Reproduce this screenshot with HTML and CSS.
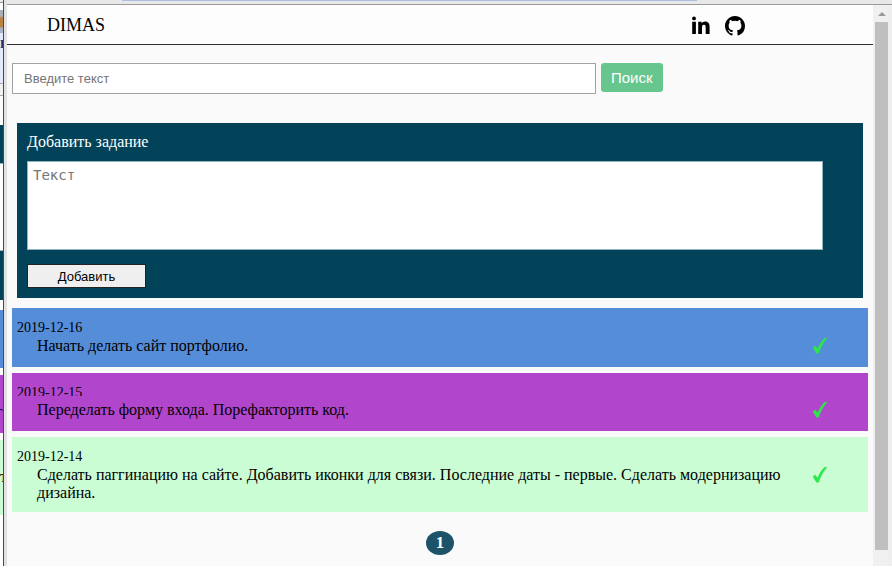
FILE: index.html
```html
<!DOCTYPE html>
<html lang="ru">
<head>
<meta charset="utf-8">
<title>DIMAS</title>
<link rel="stylesheet" href="styles.css">
</head>
<body>
<div class="desktop">
  <div class="behind" aria-hidden="true">
    <div class="behind-photo"></div>
    <div class="behind-tab">и</div>
    <div class="behind-bar"></div>
    <div class="behind-gap"></div>
    <div class="behind-form"><div class="behind-field"></div></div>
    <div class="behind-item blue"></div>
    <div class="behind-item purple">г</div>
    <div class="behind-item green">т</div>
  </div>
  <div class="window">
    <div class="titlebar"><div class="tab"></div></div>
    <div class="viewport">
      <div class="page">
        <header class="header">
          <a class="brand" href="#">DIMAS</a>
          <nav class="social">
            <a href="#" aria-label="LinkedIn">
              <svg width="20" height="20" viewBox="0 0 20 20"><circle cx="3" cy="2.400" r="1.900"/><path d="M1.200 5.800h3.700v12.200H1.200zM7.200 5.800h3.500v1.600c.6-1.100 1.800-1.900 3.400-1.900 3.400 0 4.500 2.300 4.500 5.400v7.100h-3.900v-6.300c0-1.600-.2-2.900-1.700-2.900-1.700 0-2 1.300-2 2.900v6.300H7.200z"/></svg>
            </a>
            <a href="#" aria-label="GitHub">
              <svg width="20" height="20" viewBox="0 0 16 16"><path d="M8 0C3.58 0 0 3.58 0 8c0 3.54 2.29 6.53 5.47 7.59.4.07.55-.17.55-.38 0-.19-.01-.82-.01-1.49-2.01.37-2.53-.49-2.69-.94-.09-.23-.48-.94-.82-1.13-.28-.15-.68-.52-.01-.53.63-.01 1.08.58 1.23.82.72 1.21 1.87.87 2.33.66.07-.52.28-.87.51-1.07-1.78-.2-3.64-.89-3.64-3.95 0-.87.31-1.59.82-2.15-.08-.2-.36-1.02.08-2.12 0 0 .67-.21 2.2.82a7.6 7.6 0 0 1 4 0c1.53-1.04 2.2-.82 2.2-.82.44 1.1.16 1.92.08 2.12.51.56.82 1.27.82 2.15 0 3.07-1.87 3.75-3.65 3.95.29.25.54.73.54 1.48 0 1.07-.01 1.93-.01 2.2 0 .21.15.46.55.38A8.01 8.01 0 0 0 16 8c0-4.42-3.58-8-8-8z"/></svg>
            </a>
          </nav>
        </header>
        <form class="search">
          <input class="search-input" type="text" placeholder="Введите текст" aria-label="Введите текст">
          <button class="search-button" type="button">Поиск</button>
        </form>
        <form class="add">
          <label class="add-label" for="task">Добавить задание</label>
          <textarea class="add-text" id="task" placeholder="Текст"></textarea>
          <button class="add-button" type="button">Добавить</button>
        </form>
        <main class="tasks">
          <article class="task blue">
            <time class="date">2019-12-16</time>
            <div class="row"><p class="text">Начать делать сайт портфолио.</p>
              <button class="done" type="button" aria-label="Готово"><svg width="16" height="16" viewBox="0 0 16 16"><path d="M1 9.7 3.4 8l2.1 3.3C7.300 7 9.600 3 12.300.5L15 .1C11.600 4 8.600 9 6.500 15.300H4.600z"/></svg></button></div>
          </article>
          <article class="task compact purple">
            <time class="date">2019-12-15</time>
            <div class="row"><p class="text">Переделать форму входа. Порефакторить код.</p>
              <button class="done" type="button" aria-label="Готово"><svg width="16" height="16" viewBox="0 0 16 16"><path d="M1 9.7 3.4 8l2.1 3.3C7.300 7 9.600 3 12.300.5L15 .1C11.600 4 8.600 9 6.500 15.300H4.600z"/></svg></button></div>
          </article>
          <article class="task green">
            <time class="date">2019-12-14</time>
            <div class="row"><p class="text">Сделать паггинацию на сайте. Добавить иконки для связи. Последние даты - первые. Сделать модернизацию дизайна.</p>
              <button class="done" type="button" aria-label="Готово"><svg width="16" height="16" viewBox="0 0 16 16"><path d="M1 9.7 3.4 8l2.1 3.3C7.300 7 9.600 3 12.300.5L15 .1C11.600 4 8.600 9 6.500 15.300H4.600z"/></svg></button></div>
          </article>
        </main>
        <nav class="pages"><a class="page-link" href="#">1</a></nav>
      </div>
      <div class="scrollbar" aria-hidden="true"><div class="arrow"></div><div class="thumb"></div></div>
    </div>
  </div>
</div>
</body>
</html>
```
FILE: styles.css
```css
* { box-sizing: border-box; }

body {
  margin: 0;
  background: #fff;
  color: #000;
  font-family: "Liberation Serif", serif;
}

a { color: inherit; text-decoration: none; }

.desktop {
  display: grid;
  grid-template-columns: 3px minmax(0, 1fr);
  padding-bottom: 6px;
}

.blue { background: #558dd9; }
.purple { background: #b146cd; }
.green { background: #cbfdd4; }

/* Sliver of the window underneath */
.behind { overflow: hidden; font-size: 16px; line-height: 18px; }
.behind-photo { height: 33px; background: linear-gradient(#e8e8e8 0 2px, #999 2px 3px, #fff 3px 10px, #a9b0b8 10px 16px, #b98245 18px 27px, #aab4c4 28px 33px); }
.behind-tab { height: 50px; background: #e3eafb; color: #26356e; font-weight: bold; padding-top: 1px; }
.behind-bar { height: 13px; border: solid #aaa; border-width: 1px 0; background: #f1f1f1; }
.behind-gap { height: 29px; background: #fcfcfc; }
.behind-form { height: 175px; padding: 38px 0 49px; margin-bottom: 10px; background: #02435a; }
.behind-field { height: 88px; background: #fff; border: solid #9bb; border-width: 1px 0; }
.behind-item { height: 58px; padding-top: 28px; margin-bottom: 7px; text-indent: -4px; }
.behind-item.green { height: 75px; text-indent: 0; }

.window { border-left: 1px solid #4c4848; padding-left: 3px; background: #e2e2e2; }
.titlebar { height: 5px; border-bottom: 1px solid #999; background: #e8e8e8; }
.tab { width: 65%; height: 1px; margin-left: 13%; background: #adbddc; }

.viewport {
  display: grid;
  grid-template-columns: minmax(0, 1fr) 16px;
  padding-right: 3px;
  background: #eee;
}

.page { background: #fafafa; }

.header {
  display: flex;
  align-items: center;
  justify-content: space-between;
  height: 40px;
  padding: 2px 128px 0 40px;
  border-bottom: 1px solid #302c30;
  background: #fdfdfd;
}
.brand { font-size: 18px; }
.social { display: flex; gap: 14px; }
.social svg { display: block; }

.search { display: flex; gap: 5px; margin: 18px 5px 29px; }
.search-input {
  flex: 0 1 584px;
  min-width: 0;
  height: 31px;
  padding: 0 11px;
  border: 1px solid #a2a2a2;
  border-radius: 0;
  background: #fff;
  font: 13px "Liberation Sans", sans-serif;
}
.search-input::placeholder, .add-text::placeholder { color: #757575; opacity: 1; }
.search-button {
  height: 29px;
  padding: 0 10px;
  border: 0;
  border-radius: 3px;
  background: #67c58e;
  color: #fff;
  font: 15px "Liberation Sans", sans-serif;
}

.add { margin: 0 10px 10px; padding: 10px; background: #02435a; }
.add-label { display: block; margin-bottom: 10px; color: #fff; font-size: 16px; line-height: 18px; }
.add-text {
  display: block;
  width: calc(100% - 30px);
  height: 89px;
  margin-bottom: 14px;
  padding: 5px;
  border: 1px solid #8fb4bb;
  border-radius: 0;
  background: #fff;
  font: 14px "DejaVu Sans Mono", monospace;
  resize: none;
}
.add-button {
  display: block;
  min-width: 119px;
  height: 24px;
  padding: 1px 0 0;
  border: 1px solid #222;
  border-radius: 0;
  background: #efefef;
  color: #000;
  font: 13px "Liberation Sans", sans-serif;
}

.tasks { display: grid; gap: 6px; margin: 0 5px; }
.task { min-height: 59px; padding: 10px 5px; }
.date { display: block; height: 19px; font-size: 14px; line-height: 19px; }
.row { display: flex; align-items: flex-start; justify-content: space-between; padding: 0 35px 0 20px; }
.text { max-width: 750px; margin: 0; font-size: 16px; line-height: 18px; }
.done { flex: none; padding: 1px 0; border: 0; background: none; }
.done svg { display: block; fill: #2be84a; stroke: #2be84a; stroke-width: 0.5; }

.compact { min-height: 58px; }
.compact .date { height: 13px; margin-bottom: 5px; overflow: hidden; }

.pages { display: flex; justify-content: center; padding: 19px 0 11px; }
.page-link {
  min-width: 28px;
  border-radius: 50%;
  background: #1d5368;
  color: #fff;
  font-size: 17px;
  font-weight: bold;
  line-height: 24px;
  text-align: center;
}

.scrollbar { display: flex; flex-direction: column; padding: 7px 1px 16px 2px; background: #f0f0f0; }
.arrow { align-self: center; border: solid transparent; border-width: 0 4px 4px; border-bottom-color: #999; margin-bottom: 6px; }
.thumb { flex: 1; background: #bfbfbf; }
```
